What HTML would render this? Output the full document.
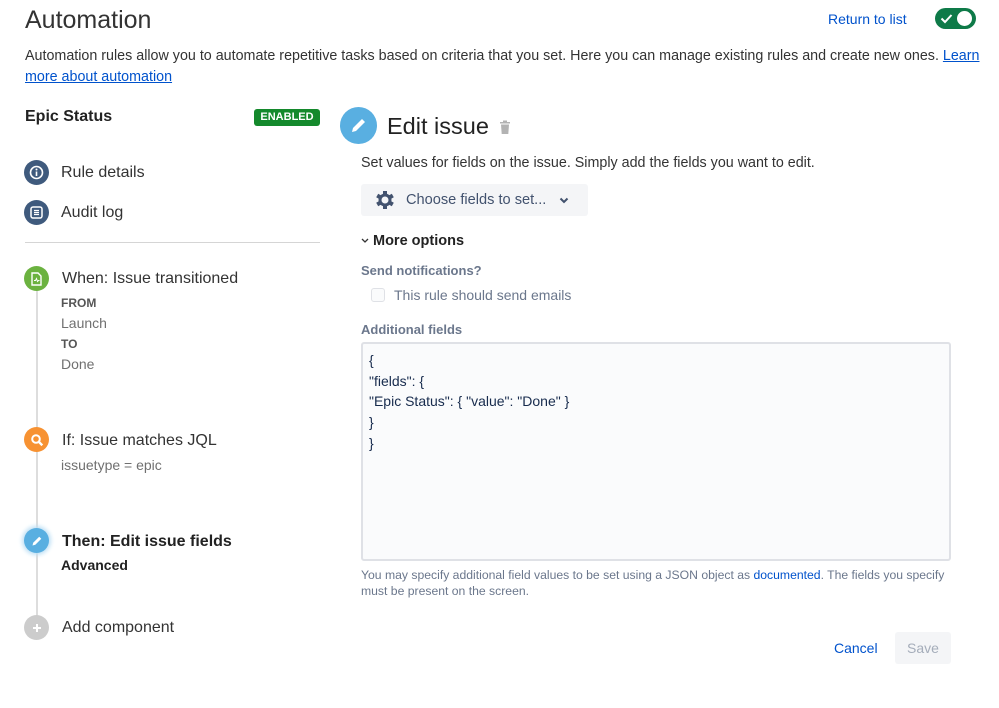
<!DOCTYPE html>
<html><head><meta charset="utf-8"><style>
*{margin:0;padding:0;box-sizing:border-box}
body{width:999px;height:708px;background:#fff;font-family:"Liberation Sans",sans-serif;color:#172b4d;position:relative;overflow:hidden}
.a{position:absolute;white-space:nowrap}
a{color:#0052cc}
.ic{position:absolute;width:25px;height:25px;border-radius:50%;display:flex;align-items:center;justify-content:center}
.lbl{font-size:16px;color:#333}
.sub{font-size:14px;color:#707070}
.cap{font-size:12px;font-weight:bold;color:#555}
</style></head><body>
<div class="a" style="left:25px;top:6px;font-size:25px;color:#333">Automation</div>
<div class="a" style="left:828px;top:11px;font-size:14px;color:#0052cc">Return to list</div>
<div class="a" style="left:935px;top:8px;width:41px;height:21px;border-radius:11px;background:#0e7a48">
 <svg class="a" style="left:5px;top:5px" width="13" height="11" viewBox="0 0 13 11"><path d="M1.5 5.5l3.5 3.5 6.5-7" stroke="#fff" stroke-width="2" fill="none"/></svg>
 <div class="a" style="left:22px;top:3px;width:15px;height:15px;border-radius:50%;background:#fff"></div>
</div>
<div class="a" style="left:25px;top:46px;font-size:14.3px;line-height:21px;color:#333;white-space:normal;width:958px">Automation rules allow you to automate repetitive tasks based on criteria that you set. Here you can manage existing rules and create new ones. <a href="#">Learn more about automation</a></div>

<div class="a" style="left:25px;top:108px;font-size:16px;font-weight:bold;color:#222">Epic Status</div>
<div class="a" style="left:254px;top:109px;width:66px;height:17px;background:#14892c;border-radius:3px;color:#fff;font-size:11px;font-weight:bold;text-align:center;line-height:17px">ENABLED</div>

<div class="ic" style="left:24px;top:160px;background:#3f5a7d"><svg width="15" height="15" viewBox="0 0 15 15"><circle cx="7.5" cy="7.5" r="6" stroke="#fff" stroke-width="1.6" fill="none"/><rect x="6.7" y="6.5" width="1.6" height="4.5" fill="#fff"/><circle cx="7.5" cy="4.5" r="1" fill="#fff"/></svg></div>
<div class="a lbl" style="left:61px;top:164px">Rule details</div>
<div class="ic" style="left:24px;top:200px;background:#3f5a7d"><svg width="15" height="15" viewBox="0 0 15 15"><rect x="2" y="2" width="11" height="11" rx="2" stroke="#fff" stroke-width="1.5" fill="none"/><path d="M5 5.5h5M5 7.5h5M5 9.5h5" stroke="#fff" stroke-width="1.2"/></svg></div>
<div class="a lbl" style="left:61px;top:204px">Audit log</div>
<div class="a" style="left:25px;top:242px;width:295px;height:1px;background:#d5d5d5"></div>

<div class="a" style="left:36px;top:290px;width:2px;height:335px;background:#ddd"></div>
<div class="ic" style="left:24px;top:266px;background:#6bb240"><svg width="13" height="14" viewBox="0 0 13 14"><path d="M2 1h6l3 3v9H2z" stroke="#fff" stroke-width="1.4" fill="none"/><path d="M4 8.5h1.5l1-2 1 3 1-1h1" stroke="#fff" stroke-width="1" fill="none"/></svg></div>
<div class="a lbl" style="left:62px;top:270px">When: Issue transitioned</div>
<div class="a cap" style="left:61px;top:296px">FROM</div>
<div class="a sub" style="left:61px;top:315px">Launch</div>
<div class="a cap" style="left:61px;top:337px">TO</div>
<div class="a sub" style="left:61px;top:356px">Done</div>

<div class="ic" style="left:24px;top:427px;background:#f79232"><svg width="14" height="14" viewBox="0 0 14 14"><circle cx="6" cy="6" r="3.8" stroke="#fff" stroke-width="2" fill="none"/><path d="M8.8 8.8l3.5 3.5" stroke="#fff" stroke-width="2.4"/></svg></div>
<div class="a lbl" style="left:62px;top:432px">If: Issue matches JQL</div>
<div class="a sub" style="left:61px;top:457px">issuetype = epic</div>

<div class="ic" style="left:24px;top:528px;background:#59afe1;box-shadow:0 0 4px 2px #bfe0f5"><svg width="12" height="12" viewBox="0 0 12 12"><path d="M1.5 10.5l.7-2.8 6-6 2.1 2.1-6 6z" fill="#fff"/></svg></div>
<div class="a" style="left:62px;top:533px;font-size:16px;font-weight:bold;color:#222">Then: Edit issue fields</div>
<div class="a" style="left:61px;top:557px;font-size:14px;font-weight:bold;color:#222">Advanced</div>

<div class="ic" style="left:24px;top:615px;background:#ccc"><svg width="10" height="10" viewBox="0 0 10 10"><path d="M5 1v8M1 5h8" stroke="#fff" stroke-width="2"/></svg></div>
<div class="a lbl" style="left:62px;top:619px">Add component</div>

<div class="a" style="left:340px;top:107px;width:37px;height:37px;border-radius:50%;background:#59afe1"><svg class="a" style="left:10px;top:9px" width="18" height="18" viewBox="0 0 18 18"><path d="M2 16l1-4 9-9 3 3-9 9z" fill="#fff"/></svg></div>
<div class="a" style="left:387px;top:113px;font-size:23.5px;color:#222">Edit issue</div>
<svg class="a" style="left:499px;top:120px" width="12" height="15" viewBox="0 0 12 15"><rect x="1" y="2" width="10" height="1.5" fill="#b3b3b3"/><rect x="4" y="0.5" width="4" height="2" fill="#b3b3b3"/><path d="M2 4.5h8l-.7 9.5H2.7z" fill="#b3b3b3"/></svg>
<div class="a" style="left:361px;top:155px;font-size:14.3px;color:#333">Set values for fields on the issue. Simply add the fields you want to edit.</div>
<div class="a" style="left:361px;top:184px;width:227px;height:32px;background:#f4f5f7;border-radius:3px"></div>
<svg class="a" style="left:375px;top:190px" width="20" height="20" viewBox="0 0 20 20"><g fill="#42526e"><circle cx="10" cy="10" r="6.5"/><rect x="8" y="1" width="4" height="18"/><rect x="8" y="1" width="4" height="18" transform="rotate(60 10 10)"/><rect x="8" y="1" width="4" height="18" transform="rotate(120 10 10)"/></g><circle cx="10" cy="10" r="3.5" fill="#f4f5f7"/></svg>
<div class="a" style="left:406px;top:192px;font-size:14.6px;color:#42526e">Choose fields to set...</div>
<svg class="a" style="left:559px;top:197px" width="10" height="7" viewBox="0 0 10 7"><path d="M1.5 1.5l3.5 3.5 3.5-3.5" stroke="#42526e" stroke-width="2" fill="none"/></svg>
<svg class="a" style="left:361px;top:238px" width="8" height="6" viewBox="0 0 8 6"><path d="M1 1l3 3 3-3" stroke="#333" stroke-width="1.3" fill="none"/></svg>
<div class="a" style="left:373px;top:233px;font-size:14.5px;font-weight:bold;color:#222">More options</div>
<div class="a" style="left:361px;top:263px;font-size:13px;font-weight:bold;color:#6b778c">Send notifications?</div>
<div class="a" style="left:371px;top:288px;width:14px;height:14px;border:1.5px solid #dfe1e6;border-radius:3px;background:#fafbfc"></div>
<div class="a" style="left:394px;top:287px;font-size:14px;color:#6b778c">This rule should send emails</div>
<div class="a" style="left:361px;top:322px;font-size:13px;font-weight:bold;color:#6b778c">Additional fields</div>
<div class="a" style="left:361px;top:342px;width:590px;height:219px;border:2px solid #dfe1e6;border-radius:3px;background:#fafbfc"></div>
<div class="a" style="left:369px;top:350px;font-size:14px;line-height:20.7px;color:#172b4d;white-space:pre">{
"fields": {
"Epic Status": { "value": "Done" }
}
}</div>
<div class="a" style="left:361px;top:567px;font-size:12.2px;line-height:16px;color:#6b778c;white-space:normal;width:600px">You may specify additional field values to be set using a JSON object as <span style="color:#0052cc">documented</span>. The fields you specify must be present on the screen.</div>
<div class="a" style="left:834px;top:640px;font-size:14px;color:#0052cc">Cancel</div>
<div class="a" style="left:895px;top:632px;width:56px;height:32px;background:#f4f5f7;border-radius:3px;color:#a5adba;font-size:14px;text-align:center;line-height:32px">Save</div>
</body></html>
